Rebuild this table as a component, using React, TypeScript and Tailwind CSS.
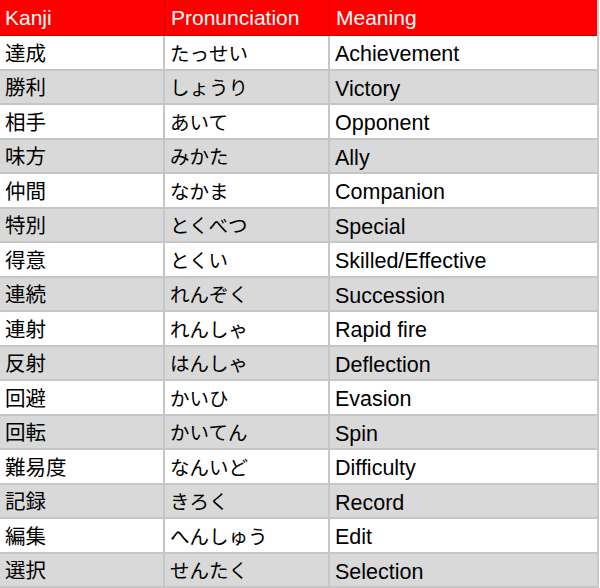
import React from 'react';

interface Word {
  kanji: string;
  reading: string;
  meaning: string;
}

const words: Word[] = [
  { kanji: '達成', reading: 'たっせい', meaning: 'Achievement' },
  { kanji: '勝利', reading: 'しょうり', meaning: 'Victory' },
  { kanji: '相手', reading: 'あいて', meaning: 'Opponent' },
  { kanji: '味方', reading: 'みかた', meaning: 'Ally' },
  { kanji: '仲間', reading: 'なかま', meaning: 'Companion' },
  { kanji: '特別', reading: 'とくべつ', meaning: 'Special' },
  { kanji: '得意', reading: 'とくい', meaning: 'Skilled/Effective' },
  { kanji: '連続', reading: 'れんぞく', meaning: 'Succession' },
  { kanji: '連射', reading: 'れんしゃ', meaning: 'Rapid fire' },
  { kanji: '反射', reading: 'はんしゃ', meaning: 'Deflection' },
  { kanji: '回避', reading: 'かいひ', meaning: 'Evasion' },
  { kanji: '回転', reading: 'かいてん', meaning: 'Spin' },
  { kanji: '難易度', reading: 'なんいど', meaning: 'Difficulty' },
  { kanji: '記録', reading: 'きろく', meaning: 'Record' },
  { kanji: '編集', reading: 'へんしゅう', meaning: 'Edit' },
  { kanji: '選択', reading: 'せんたく', meaning: 'Selection' },
];

const font = { fontFamily: '"Liberation Sans", "Noto Sans CJK JP", sans-serif' };

const App: React.FC = () => {
  return (
    <div className="w-[600px] h-[588px] bg-white overflow-hidden" style={font}>
      <div className="w-[599px] border-r-2 border-[#c9c9c9]">
        {/* header */}
        <div className="grid grid-cols-[165px_165px_1fr] h-[36px] bg-[#ff0000] text-white text-[21px] border-b border-[#d40000]">
          <div className="flex items-center pl-[5px] border-r border-[#e00000]">Kanji</div>
          <div className="flex items-center pl-[6px] border-r border-[#e00000]">Pronunciation</div>
          <div className="flex items-center pl-[6px]">Meaning</div>
        </div>

        {words.map((w, i) => (
          <div
            key={w.kanji}
            className={`grid grid-cols-[165px_165px_1fr] h-[34.5px] text-black border-b-2 border-[#c6c6c6] ${
              i % 2 === 1 ? 'bg-[#d9d9d9]' : 'bg-white'
            }`}
          >
            <div className="flex items-center pl-[5px] pt-[2px] text-[20.5px] border-r-2 border-[#c6c6c6]">{w.kanji}</div>
            <div className="flex items-center pl-[5px] pt-[2px] text-[19.5px] border-r-2 border-[#c6c6c6]">{w.reading}</div>
            <div className="flex items-center pl-[5px] pt-[2px] text-[21.5px]">{w.meaning}</div>
          </div>
        ))}
      </div>
    </div>
  );
};

export default App;
